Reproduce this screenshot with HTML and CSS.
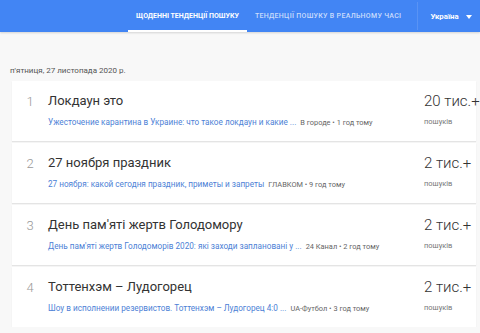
FILE: index.html
```html
<!DOCTYPE html>
<html lang="uk">
<head>
<meta charset="UTF-8">
<meta name="viewport" content="width=device-width, initial-scale=1.0">
<title>Тенденції пошуку</title>
<link rel="stylesheet" href="styles.css">
</head>
<body>

<header class="topbar">
    <nav class="tabs">
        <a class="tab active">Щоденні тенденції пошуку</a>
        <a class="tab">Тенденції пошуку в реальному часі</a>
    </nav>
    <div class="region">
        <span>Україна</span>
        <span class="caret"></span>
    </div>
</header>

<main class="page">
    <div class="date">п'ятниця, 27 листопада 2020 р.</div>

    <div class="feed">
        <div class="item">
            <div class="rank">1</div>
            <div class="details">
                <div class="title">Локдаун это</div>
                <div class="summary"><a>Ужесточение карантина в Украине: что такое локдаун и какие ...</a><span class="source">В городе • 1 год тому</span></div>
            </div>
            <div class="count">
                <div class="value">20 тис.+</div>
                <div class="label">пошуків</div>
            </div>
        </div>

        <div class="item">
            <div class="rank">2</div>
            <div class="details">
                <div class="title">27 ноября праздник</div>
                <div class="summary"><a>27 ноября: какой сегодня праздник, приметы и запреты</a><span class="source">ГЛАВКОМ • 9 год тому</span></div>
            </div>
            <div class="count">
                <div class="value">2 тис.+</div>
                <div class="label">пошуків</div>
            </div>
        </div>

        <div class="item">
            <div class="rank">3</div>
            <div class="details">
                <div class="title">День пам'яті жертв Голодомору</div>
                <div class="summary"><a>День пам'яті жертв Голодоморів 2020: які заходи заплановані у ...</a><span class="source">24 Канал • 2 год тому</span></div>
            </div>
            <div class="count">
                <div class="value">2 тис.+</div>
                <div class="label">пошуків</div>
            </div>
        </div>

        <div class="item">
            <div class="rank">4</div>
            <div class="details">
                <div class="title">Тоттенхэм – Лудогорец</div>
                <div class="summary"><a>Шоу в исполнении резервистов. Тоттенхэм – Лудогорец 4:0 ...</a><span class="source">UA-Футбол • 3 год тому</span></div>
            </div>
            <div class="count">
                <div class="value">2 тис.+</div>
                <div class="label">пошуків</div>
            </div>
        </div>
    </div>
</main>

</body>
</html>
```

FILE: styles.css
```css
body {
    font-family: Roboto, "Noto Sans", Arial, sans-serif;
    margin: 0;
    padding: 0;
    background-color: #f8f8f8;
    color: #333;
}

.topbar {
    display: flex;
    align-items: stretch;
    height: 32px;
    background-color: #4285f4;
    padding-left: 128px;
    box-shadow: 0 1px 2px rgba(0, 0, 0, 0.15);
}

.tabs {
    display: flex;
}

.tab {
    display: flex;
    align-items: center;
    padding: 0 8px;
    font-size: 7px;
    font-weight: 500;
    letter-spacing: 0.3px;
    text-transform: uppercase;
    color: rgba(255, 255, 255, 0.72);
    border-bottom: 2px solid transparent;
    box-sizing: border-box;
    padding-top: 2px;
    white-space: nowrap;
}

.tab.active {
    color: #fff;
    font-weight: 700;
    letter-spacing: 0;
    border-bottom-color: #fff;
}

.region {
    display: flex;
    align-items: center;
    gap: 7px;
    margin-left: 8px;
    padding-left: 12px;
    border-left: 1px solid rgba(255, 255, 255, 0.12);
    margin-top: 2px;
    margin-bottom: 2px;
    font-size: 7.8px;
    font-weight: 700;
    color: #fff;
}

.caret {
    width: 0;
    height: 0;
    border-left: 3px solid transparent;
    border-right: 3px solid transparent;
    border-top: 4px solid #fff;
    margin-top: 1px;
}

.page {
    padding: 0 4px 0 12px;
}

.date {
    padding: 34px 0 6px;
    margin-left: -2px;
    font-size: 8px;
    color: #555;
}

.feed {
    display: flex;
    flex-direction: column;
    gap: 2px;
}

.item {
    display: flex;
    height: 60px;
    background-color: #fff;
    box-shadow: 0 1px 1px rgba(0, 0, 0, 0.08);
}

.rank {
    width: 36px;
    padding-top: 13px;
    text-align: center;
    font-size: 13px;
    color: #999;
    font-weight: 300;
}

.details {
    flex: 1;
    padding-top: 11px;
    min-width: 0;
}

.title {
    font-size: 13px;
    color: #333;
    line-height: 18px;
}

.summary {
    margin-top: 7px;
    font-size: 8.2px;
    white-space: nowrap;
}

.summary a {
    color: #4d7fd6;
}

.source {
    margin-left: 4px;
    font-size: 7.4px;
    color: #666;
}

.count {
    width: 52px;
    flex-shrink: 0;
    padding-top: 10px;
    white-space: nowrap;
}

.count .value {
    font-size: 15px;
    font-weight: 300;
    color: #333;
    line-height: 20px;
}

.count .label {
    margin-top: 6px;
    font-size: 7.5px;
    color: #777;
}
```
